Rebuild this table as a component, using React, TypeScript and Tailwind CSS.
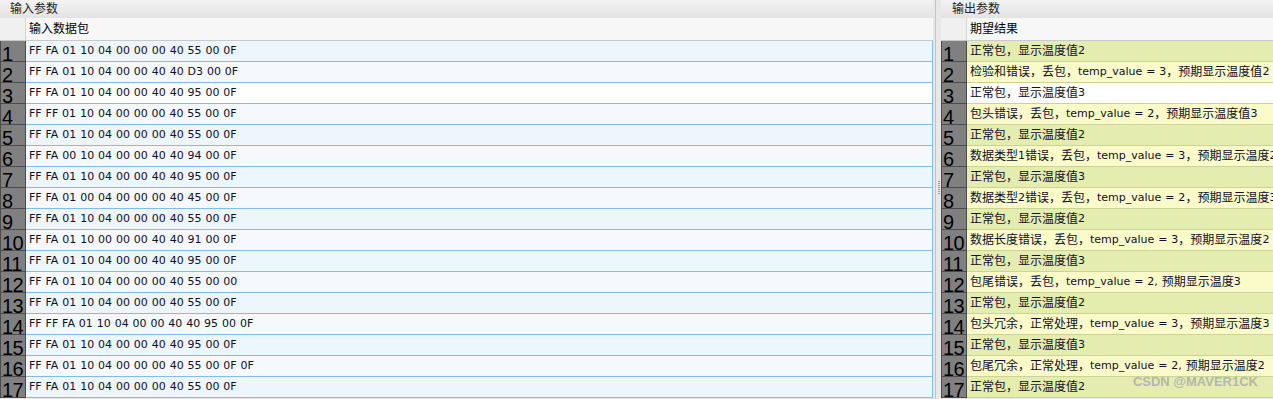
const inputRows = [
  "FF FA 01 10 04 00 00 00 40 55 00 0F",
  "FF FA 01 10 04 00 00 40 40 D3 00 0F",
  "FF FA 01 10 04 00 00 40 40 95 00 0F",
  "FF FF 01 10 04 00 00 00 40 55 00 0F",
  "FF FA 01 10 04 00 00 00 40 55 00 0F",
  "FF FA 00 10 04 00 00 40 40 94 00 0F",
  "FF FA 01 10 04 00 00 40 40 95 00 0F",
  "FF FA 01 00 04 00 00 00 40 45 00 0F",
  "FF FA 01 10 04 00 00 00 40 55 00 0F",
  "FF FA 01 10 00 00 00 40 40 91 00 0F",
  "FF FA 01 10 04 00 00 40 40 95 00 0F",
  "FF FA 01 10 04 00 00 00 40 55 00 00",
  "FF FA 01 10 04 00 00 00 40 55 00 0F",
  "FF FF FA 01 10 04 00 00 40 40 95 00 0F",
  "FF FA 01 10 04 00 00 40 40 95 00 0F",
  "FF FA 01 10 04 00 00 00 40 55 00 0F 0F",
  "FF FA 01 10 04 00 00 00 40 55 00 0F",
];

const outputRows = [
  "正常包，显示温度值2",
  "检验和错误，丢包，temp_value = 3，预期显示温度值2",
  "正常包，显示温度值3",
  "包头错误，丢包，temp_value = 2，预期显示温度值3",
  "正常包，显示温度值2",
  "数据类型1错误，丢包，temp_value = 3，预期显示温度2",
  "正常包，显示温度值3",
  "数据类型2错误，丢包，temp_value = 2，预期显示温度3",
  "正常包，显示温度值2",
  "数据长度错误，丢包，temp_value = 3，预期显示温度2",
  "正常包，显示温度值3",
  "包尾错误，丢包，temp_value = 2, 预期显示温度3",
  "正常包，显示温度值2",
  "包头冗余，正常处理，temp_value = 3，预期显示温度3",
  "正常包，显示温度值3",
  "包尾冗余，正常处理，temp_value = 2, 预期显示温度2",
  "正常包，显示温度值2",
];

// CJK runs at 12px, latin runs at 11px (grid used a Verdana-like face)
const MixedText = ({ text }: { text: string }) => {
  const parts = text.split(/([\u3000-\u9fff\uff00-\uffef]+)/).filter(Boolean);
  return (
    <>
      {parts.map((p, i) =>
        /[\u3000-\u9fff\uff00-\uffef]/.test(p) ? (
          <span key={i} className="text-[12px]">
            {p}
          </span>
        ) : (
          <span key={i} className="text-[11px] [word-spacing:0.4px]">
            {p}
          </span>
        )
      )}
    </>
  );
};

const RowNum = ({ n }: { n: number }) => (
  <div className="w-[26px] shrink-0 h-[21px] bg-[#808080] border-l border-r border-b border-[#4b4b4b]">
    <div className="pl-[1px] pt-[6px] leading-[14px] text-[20px] tracking-[-0.5px] text-black font-['Liberation_Sans',Arial,sans-serif] whitespace-nowrap">
      {n}
    </div>
  </div>
);

interface PanelProps {
  title: string;
  header: string;
  rows: string[];
  variant: "input" | "output";
}

const Panel = ({ title, header, rows, variant }: PanelProps) => {
  const isInput = variant === "input";
  return (
    <div className={`flex flex-col overflow-hidden ${isInput ? "w-[933px] shrink-0" : "flex-1 min-w-0"}`}>
      <div
        className={`h-[18px] flex items-center bg-gradient-to-b from-[#f3f3f3] to-[#e3e3e3] text-[12px] text-[#222] leading-none ${
          isInput ? "pl-[10px]" : "pl-[11px]"
        }`}
      >
        {title}
      </div>
      <div className="flex h-[23px] border-b border-[#c9c9c9] bg-[#f7f7f7]">
        <div className="w-[26px] shrink-0 bg-[#f0f0f0] border-r border-[#d6d6d6]" />
        <div className="flex-1 flex items-center pl-[3px] text-[12px] text-black whitespace-nowrap">
          {header}
        </div>
      </div>
      {rows.map((r, i) => {
        const n = i + 1;
        let bg: string;
        if (isInput) {
          bg = n === 3 ? "bg-white" : n % 2 === 1 ? "bg-[#edf5fd]" : "bg-[#f5f9fe]";
        } else {
          bg = n === 3 ? "bg-white" : n % 2 === 1 ? "bg-[#e4ecaf]" : "bg-[#fbfbc9]";
        }
        return (
          <div key={n} className="flex h-[21px]">
            <RowNum n={n} />
            <div
              className={`flex-1 min-w-0 flex items-center pl-[3px] border-b whitespace-pre overflow-hidden text-[#101028] ${bg} ${
                isInput ? "border-r border-[#82bbef]" : "border-[#c7d690]"
              }`}
            >
              <MixedText text={r} />
            </div>
          </div>
        );
      })}
    </div>
  );
};

export default function App() {
  return (
    <div className="relative w-[1273px] h-[399px] overflow-hidden bg-[#e8e8e8] font-['DejaVu_Sans','Noto_Sans_CJK_SC',sans-serif]">
      <div className="flex h-full">
        <Panel title="输入参数" header="输入数据包" rows={inputRows} variant="input" />
        {/* splitter */}
        <div className="w-[8px] shrink-0 flex bg-[#e8e8e8]">
          <div className="w-[2px]" />
          <div className="w-px bg-[#c4c4c4]" />
          <div className="flex-1 flex flex-col items-center justify-center pb-[24px]">
            <div className="flex flex-col gap-[1px]">
              {Array.from({ length: 7 }).map((_, i) => (
                <div key={i} className="w-[2px] h-[1px] bg-[#9a9a9a]" />
              ))}
            </div>
          </div>
        </div>
        <Panel title="输出参数" header="期望结果" rows={outputRows} variant="output" />
      </div>
      <div className="absolute right-[15px] bottom-[8px] text-[13px] font-bold text-[#a9a9a9]/80 font-['Liberation_Sans',Arial,sans-serif]">
        CSDN @MAVER1CK
      </div>
    </div>
  );
}
